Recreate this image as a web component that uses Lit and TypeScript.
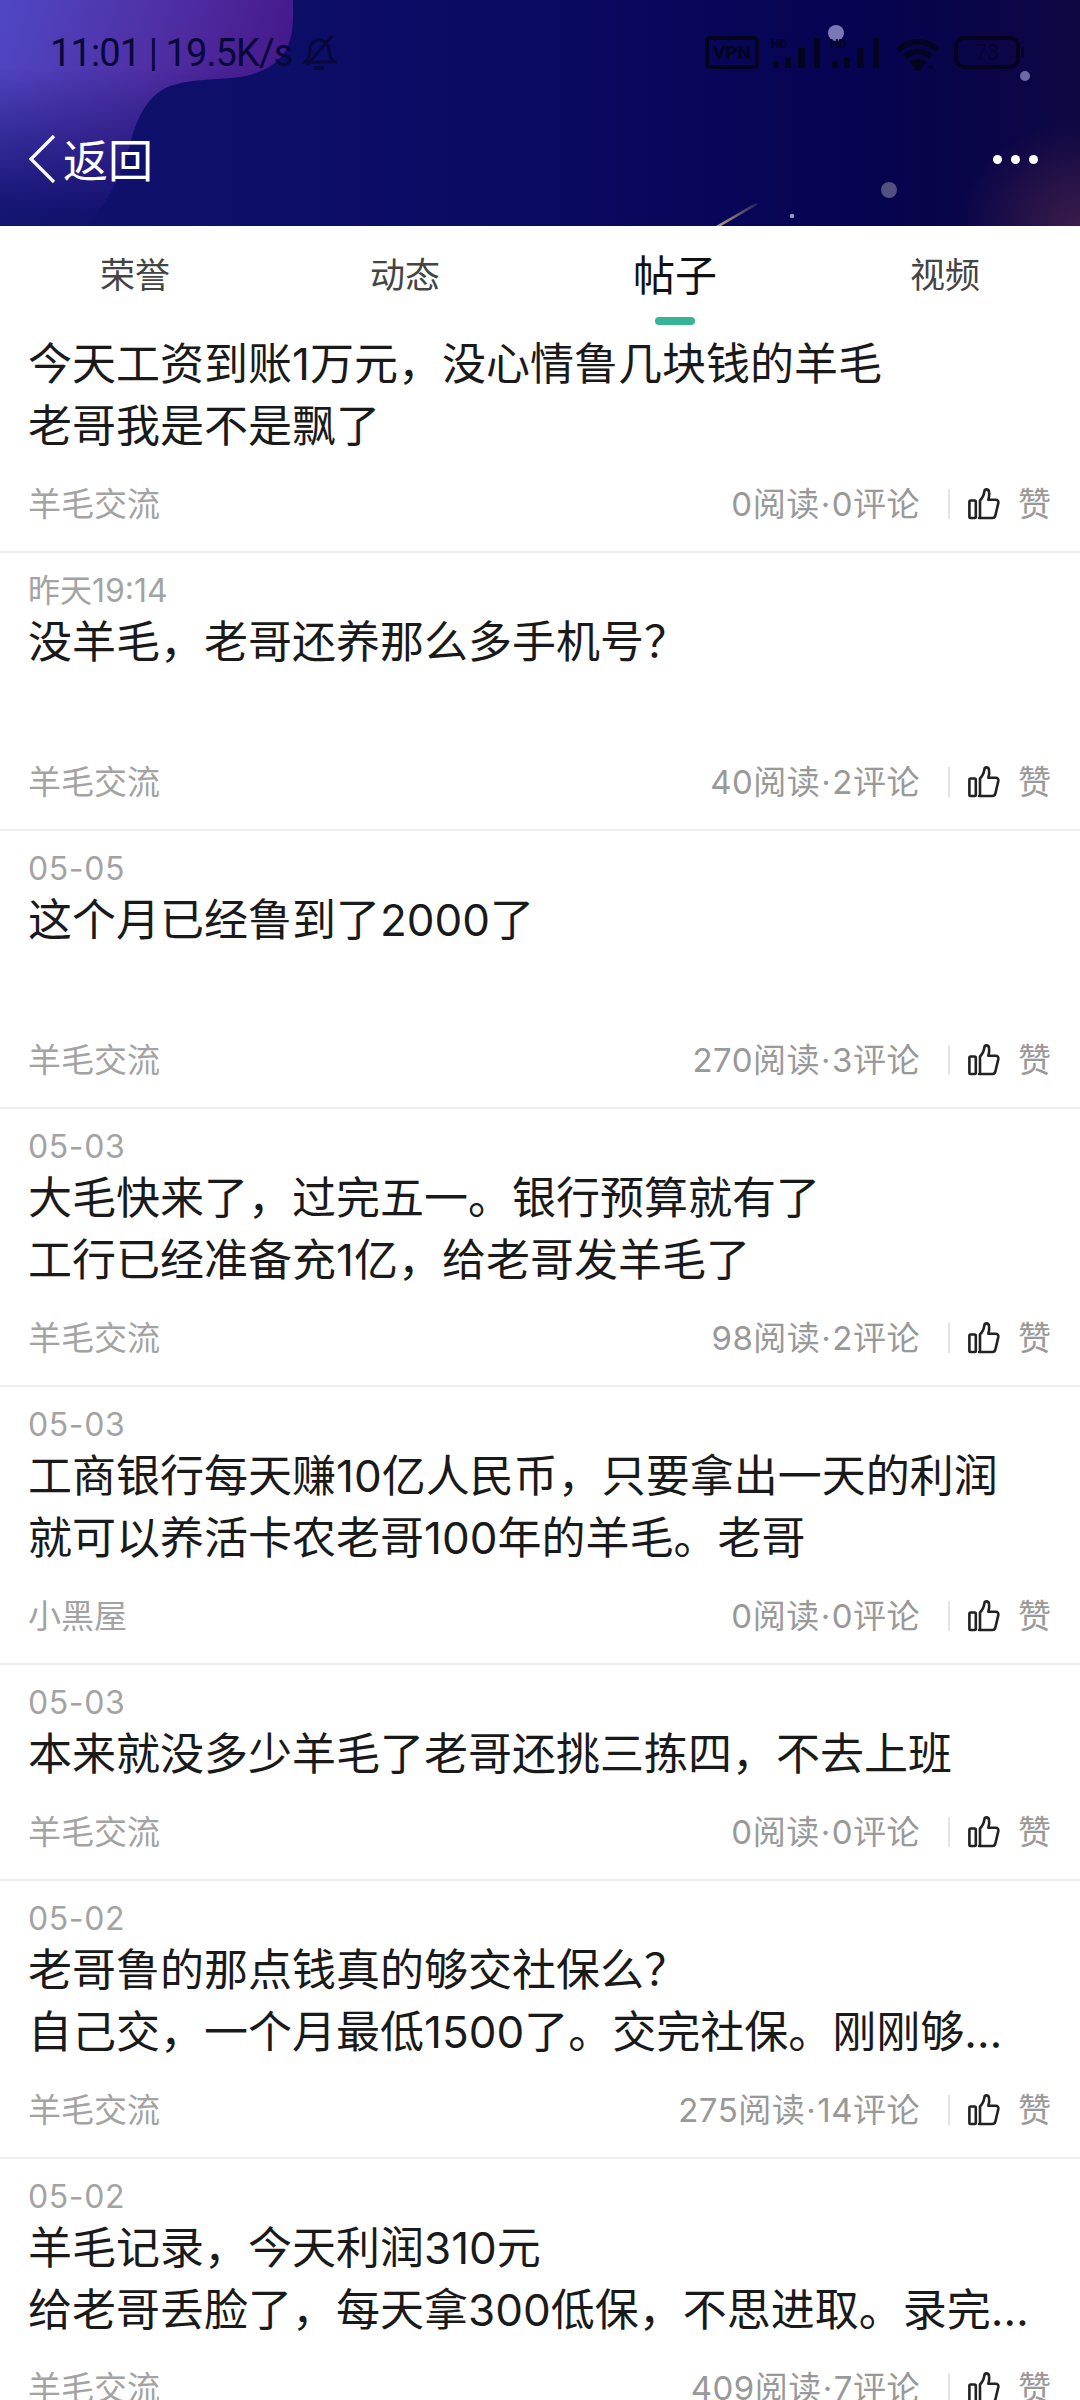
import { LitElement, html, css, svg } from 'lit';
import { customElement } from 'lit/decorators.js';

interface Post {
  date?: string;
  lines: string[];
  tag: string;
  reads: number;
  comments: number;
}

const POSTS: Post[] = [
  { lines: ['今天工资到账1万元，没心情鲁几块钱的羊毛', '老哥我是不是飘了'], tag: '羊毛交流', reads: 0, comments: 0 },
  { date: '昨天19:14', lines: ['没羊毛，老哥还养那么多手机号？', ''], tag: '羊毛交流', reads: 40, comments: 2 },
  { date: '05-05', lines: ['这个月已经鲁到了2000了', ''], tag: '羊毛交流', reads: 270, comments: 3 },
  { date: '05-03', lines: ['大毛快来了，过完五一。银行预算就有了', '工行已经准备充1亿，给老哥发羊毛了'], tag: '羊毛交流', reads: 98, comments: 2 },
  { date: '05-03', lines: ['工商银行每天赚10亿人民币，只要拿出一天的利润', '就可以养活卡农老哥100年的羊毛。老哥'], tag: '小黑屋', reads: 0, comments: 0 },
  { date: '05-03', lines: ['本来就没多少羊毛了老哥还挑三拣四，不去上班'], tag: '羊毛交流', reads: 0, comments: 0 },
  { date: '05-02', lines: ['老哥鲁的那点钱真的够交社保么？', '自己交，一个月最低1500了。交完社保。刚刚够…'], tag: '羊毛交流', reads: 275, comments: 14 },
  { date: '05-02', lines: ['羊毛记录，今天利润310元', '给老哥丢脸了，每天拿300低保，不思进取。录完…'], tag: '羊毛交流', reads: 409, comments: 7 },
];

const TABS = ['荣誉', '动态', '帖子', '视频'];

const thumbIcon = svg`<svg class="thumb" viewBox="0 0 32 32" width="32" height="32" fill="none" stroke="#222" stroke-width="2.6" stroke-linejoin="round" stroke-linecap="round">
  <rect x="1.4" y="12.5" width="6.4" height="17.5" rx="1.2"/>
  <path d="M11 30h13.4c1.5 0 2.5-.8 2.9-2.3l3-12.6c.4-1.9-.7-3.3-2.6-3.3h-7.4c.8-2.8 1.1-5.2.8-7.4-.2-1.9-1.3-3-2.7-3-1.1 0-1.8.7-2 1.8-.6 3.9-2 7-4.4 9.2V30"/>
</svg>`;

// wallpaper behind the status bar and nav bar
const headerArt = svg`<svg class="art" viewBox="0 0 1080 226" preserveAspectRatio="none">
  <defs>
    <linearGradient id="base" x1="0" y1="0" x2="1" y2="0">
      <stop offset="0" stop-color="#10126e"/>
      <stop offset=".5" stop-color="#0a0a62"/>
      <stop offset=".8" stop-color="#060350"/>
      <stop offset="1" stop-color="#0d0742"/>
    </linearGradient>
    <linearGradient id="blob" x1="0" y1="0" x2="1" y2=".25">
      <stop offset="0" stop-color="#5047c4"/>
      <stop offset=".55" stop-color="#4f2fa4"/>
      <stop offset="1" stop-color="#45188a"/>
    </linearGradient>
    <linearGradient id="blobFade" x1="0" y1="0" x2="0" y2="1">
      <stop offset="0" stop-color="#fff"/>
      <stop offset=".3" stop-color="#fff"/>
      <stop offset=".95" stop-color="#fff" stop-opacity=".05"/>
    </linearGradient>
    <mask id="fade"><rect width="1080" height="226" fill="url(#blobFade)"/></mask>
    <radialGradient id="glow" cx="1" cy="1" r="1">
      <stop offset="0" stop-color="#3a1c4a"/>
      <stop offset="1" stop-color="#3a1c4a" stop-opacity="0"/>
    </radialGradient>
    <linearGradient id="streak" x1="0" y1="1" x2="1" y2="0">
      <stop offset="0" stop-color="#b8a37f"/>
      <stop offset="1" stop-color="#b8a37f" stop-opacity=".15"/>
    </linearGradient>
  </defs>
  <rect width="1080" height="226" fill="url(#base)"/>
  <path mask="url(#fade)" fill="url(#blob)" d="M0 0H293c0 14 1 26-3 40-6 22-26 33-50 37-24 3-50 2-70 9-18 7-28 22-36 44-8 26-14 60-49 96H0Z"/>
  <rect x="960" y="120" width="120" height="106" fill="url(#glow)"/>
  <path d="M721 226 757 205 758 203 752 205 716 226Z" fill="url(#streak)"/>
  <circle cx="836" cy="33" r="8" fill="#7c78b8"/>
  <circle cx="1025" cy="76" r="5" fill="#6d6aa6"/>
  <circle cx="889" cy="190" r="8" fill="#52507f"/>
  <circle cx="792" cy="216" r="2.2" fill="#9c9ac4"/>
</svg>`;

const signal = (x: number) => svg`<g transform="translate(${x} 0)">
  <text x="-2" y="20" font-size="12" font-weight="700" font-family="Roboto, sans-serif" fill="#04041f">HD</text>
  <rect x="0" y="33" width="6" height="7" rx="2"/>
  <rect x="12" y="29" width="6" height="11" rx="1"/>
  <rect x="25" y="20" width="7" height="20" rx="1"/>
  <rect x="41" y="10" width="6" height="30" rx="1"/>
</g>`;

@customElement('app-root')
export class AppRoot extends LitElement {
  static styles = css`
    :host {
      display: block;
      width: 1080px;
      height: 2400px;
      overflow: hidden;
      background: #fff;
      font-family: "Noto Sans CJK SC", "Noto Sans", sans-serif;
    }

    .header {
      position: relative;
      height: 226px;
      overflow: hidden;
      display: flex;
      flex-direction: column;
    }

    .art {
      position: absolute;
      inset: 0;
      width: 100%;
      height: 100%;
    }

    .status {
      position: relative;
      height: 106px;
      display: flex;
      align-items: center;
      justify-content: space-between;
      padding: 0 50px;
      box-sizing: border-box;
      color: #08083a;
    }

    .clock {
      display: flex;
      align-items: center;
      gap: 10px;
      font-family: Roboto, sans-serif;
      font-size: 38px;
      letter-spacing: -0.9px;
    }

    .nav {
      position: relative;
      flex: 1;
      display: flex;
      align-items: center;
      justify-content: space-between;
      padding: 0 42px 0 28px;
      color: #fff;
      margin-bottom: 14px;
    }

    .back {
      display: flex;
      align-items: center;
      gap: 6px;
      font-size: 45px;
      line-height: 60px;
    }

    .dots {
      display: flex;
      gap: 9px;
    }

    .dots i {
      width: 9px;
      height: 9px;
      border-radius: 50%;
      background: #fff;
    }

    .tabs {
      height: 107px;
      display: grid;
      grid-template-columns: repeat(4, 270px);
    }

    .tab {
      position: relative;
      display: flex;
      justify-content: center;
      padding-top: 22px;
      font-size: 35px;
      line-height: 50px;
      color: #444;
    }

    .tab.active {
      font-size: 42px;
      color: #111;
    }

    .tab.active::after {
      content: "";
      position: absolute;
      top: 91px;
      left: 115px;
      width: 40px;
      height: 8px;
      border-radius: 4px;
      background: #35b596;
    }

    .post {
      padding: 17px 0 25px 28px;
      border-bottom: 2px solid #eeeeee;
      box-sizing: border-box;
      font-family: Inter, "Noto Sans CJK SC", sans-serif;
    }

    .post:first-child {
      padding-top: 0;
    }

    .date {
      height: 41px;
      font-size: 32px;
      line-height: 41px;
      color: #a3a3a3;
    }

    .date.num {
      letter-spacing: 0.6px;
    }

    .title {
      font-size: 44px;
      line-height: 62px;
      min-height: 62px;
      color: #1a1a1a;
      white-space: nowrap;
    }

    .foot {
      display: flex;
      align-items: center;
      height: 44px;
      margin-top: 25px;
      font-size: 33px;
      line-height: 44px;
      color: #a3a3a3;
    }

    .stats {
      margin-left: auto;
      letter-spacing: 0.5px;
      color: #999;
    }

    .stats i {
      font-style: normal;
      margin: 0 1px;
    }

    .sep {
      width: 2px;
      height: 30px;
      margin: 0 18px 0 28px;
      background: #e3e3e3;
    }

    .thumb {
      display: block;
    }

    .like {
      margin: 0 29px 0 18px;
      color: #999;
    }
  `;

  private renderStatus() {
    return html`
      <div class="status">
        <div class="clock">
          <span>11:01 | 19.5K/s</span>
          <svg width="35" height="38" viewBox="0 0 35 38" fill="none" stroke="#08083a" stroke-width="3">
            <path d="M3 28c4-3 5-7 5-12 0-6 4-10 9-10s10 4 10 10c0 5 2 9 6 12Z"/>
            <path d="M12 34h10" stroke-width="3.4"/>
            <path d="M5 31 30 2"/>
          </svg>
        </div>
        <svg width="330" height="50" viewBox="0 0 330 50" fill="#04041f">
          <rect x="7" y="10" width="50" height="29" rx="3" fill="none" stroke="#04041f" stroke-width="4"/>
          <text x="32" y="31" text-anchor="middle" font-size="19" font-weight="700" font-family="Roboto, sans-serif">VPN</text>
          ${signal(73)}${signal(132)}
          <g fill="none" stroke="#04041f" stroke-width="5.5">
            <path d="M198 22c12-11 28-11 40 0"/>
            <path d="M205 29c8-7 18-7 26 0"/>
            <path d="M211 36c4-3 10-3 14 0"/>
          </g>
          <circle cx="218" cy="39" r="4"/>
          <circle cx="231" cy="39" r="2"/>
          <rect x="256" y="10" width="62" height="29" rx="8" fill="none" stroke="#04041f" stroke-width="4"/>
          <text x="287" y="32" text-anchor="middle" font-size="22" font-family="Roboto, sans-serif" opacity=".6">73</text>
          <rect x="321" y="19" width="3" height="11" rx="1.5"/>
        </svg>
      </div>
    `;
  }

  private renderPost(post: Post) {
    const numeric = post.date ? /^[\d-]+$/.test(post.date) : false;
    return html`
      <div class="post">
        ${post.date ? html`<div class="date ${numeric ? 'num' : ''}">${post.date}</div>` : ''}
        ${post.lines.map((line) => html`<div class="title">${line}</div>`)}
        <div class="foot">
          <span>${post.tag}</span>
          <span class="stats">${post.reads}阅读<i>·</i>${post.comments}评论</span>
          <span class="sep"></span>
          ${thumbIcon}
          <span class="like">赞</span>
        </div>
      </div>
    `;
  }

  render() {
    return html`
      <div class="header">
        ${headerArt}
        ${this.renderStatus()}
        <div class="nav">
          <div class="back">
            <svg width="29" height="50" viewBox="0 0 29 50" fill="none" stroke="#fff" stroke-width="3.2">
              <path d="M26 2 3 25l23 23"/>
            </svg>
            <span>返回</span>
          </div>
          <div class="dots"><i></i><i></i><i></i></div>
        </div>
      </div>
      <div class="tabs">
        ${TABS.map((t, i) => html`<div class="tab ${i === 2 ? 'active' : ''}">${t}</div>`)}
      </div>
      <div class="list">
        ${POSTS.map((p) => this.renderPost(p))}
      </div>
    `;
  }
}
